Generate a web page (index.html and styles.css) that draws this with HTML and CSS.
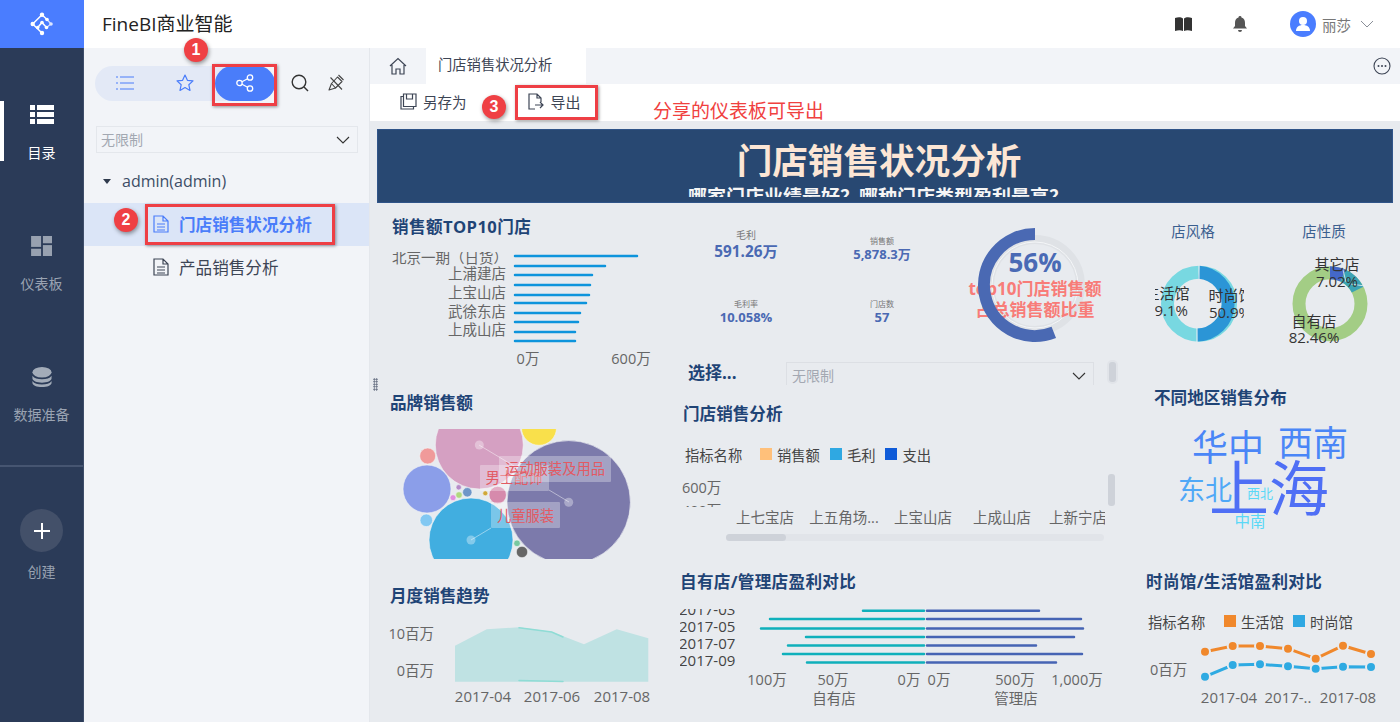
FILE: index.html
```html
<!DOCTYPE html>
<html lang="zh-CN">
<head>
<meta charset="utf-8">
<title>FineBI商业智能</title>
<link rel="stylesheet" href="styles.css">
</head>
<body>
<div class="app">
  <nav class="side">
    <div class="logo">
      <svg width="24" height="24" viewBox="0 0 24 24"><g fill="none" stroke="#fff" stroke-width="1.500"><path d="M12 21 2.700 12 12 2.700 17 7.500"/><path d="M7.700 15.500 12 10.500 16.500 15.500"/></g><path d="M16.500 15.500 21 12 17 7.500" fill="none" stroke="#cfdcff" stroke-width="1.300"/><g fill="#fff"><circle cx="12" cy="2.700" r="2.200"/><circle cx="2.700" cy="12" r="2.200"/><circle cx="12" cy="21" r="2.200"/><circle cx="7.700" cy="15.500" r="1.800"/><circle cx="12" cy="10.500" r="1.800"/><circle cx="16.500" cy="15.500" r="1.800"/><circle cx="17" cy="7.500" r="1.800"/></g><circle cx="21" cy="12" r="1.800" fill="#dbe5ff"/></svg>
    </div>
    <div class="nav-list">
      <a class="nav-item active">
        <svg width="24" height="20" viewBox="0 0 24 20"><g fill="#fff"><rect x="0" y="0" width="5" height="5"/><rect x="7" y="0" width="17" height="5"/><rect x="0" y="7" width="5" height="5"/><rect x="7" y="7" width="17" height="5"/><rect x="0" y="14" width="5" height="5"/><rect x="7" y="14" width="17" height="5"/></g></svg>
        <span>目录</span>
      </a>
      <a class="nav-item">
        <svg width="24" height="20" viewBox="0 0 24 22"><g fill="#98a1b0"><rect x="0" y="0" width="11" height="12"/><rect x="13" y="0" width="10" height="8"/><rect x="0" y="14" width="11" height="8"/><rect x="13" y="10" width="10" height="12"/></g></svg>
        <span>仪表板</span>
      </a>
      <a class="nav-item">
        <svg width="24" height="20" viewBox="0 0 24 23"><g fill="#a3acb9"><ellipse cx="12" cy="6" rx="11" ry="6"/><path d="M1 10c2 3 6 4 11 4s9-1 11-4v3c0 3-5 5-11 5S1 16 1 13z"/><path d="M1 16c2 3 6 4 11 4s9-1 11-4v2c0 3-5 5-11 5S1 21 1 18z"/></g></svg>
        <span>数据准备</span>
      </a>
    </div>
    <a class="create">
      <span class="plus"><svg width="18" height="18" viewBox="0 0 18 18"><path d="M9 1v16M1 9h16" stroke="#fff" stroke-width="2"/></svg></span>
      <span>创建</span>
    </a>
  </nav>

  <div class="shell">
    <header class="top">
      <h1>FineBI商业智能</h1>
      <div class="top-right">
        <svg width="17" height="15" viewBox="0 0 17 15"><path d="M0 1c3-1 6-1 8 .5V14c-2-1-5-1-8 0zM9 1.500C11 0 14 0 17 1v13c-3-1-6-1-8 0z" fill="#333"/></svg>
        <svg class="bell" width="14" height="16" viewBox="0 0 14 16"><path d="M7 0a1.500 1.500 0 0 1 1.500 1.600C11 2.300 12 4.500 12 7v3l2 2.500H0L2 10V7c0-2.500 1-4.700 3.500-5.400A1.500 1.500 0 0 1 7 0zM5 14h4a2 2 0 0 1-4 0z" fill="#555"/></svg>
        <span class="avatar"><svg width="16" height="16" viewBox="0 0 16 16"><circle cx="8" cy="5" r="4" fill="#fff"/><path d="M1 15c0-4 3-6 7-6s7 2 7 6z" fill="#fff"/></svg></span>
        <span class="user">丽莎</span>
        <svg class="chev" width="14" height="8" viewBox="0 0 14 8"><path d="M1 1l6 6 6-6" fill="none" stroke="#8a8f98" stroke-width="1"/></svg>
      </div>
    </header>
    <div class="body">
      <aside class="panel">
        <div class="tools">
          <div class="pill">
            <span class="pill-cell"><svg width="18" height="14" viewBox="0 0 18 14"><path d="M4 1h14M4 7h14M4 13h14M0 1h2M0 7h2M0 13h2" stroke="#4a7dfa" stroke-width="1"/></svg></span>
            <span class="pill-cell"><svg width="18" height="18" viewBox="0 0 18 18"><path d="M9 1l2.400 5.300 5.600.6-4.200 3.800 1.200 5.700L9 13.500l-5 2.900 1.200-5.700L1 6.900l5.600-.6z" fill="none" stroke="#4a7dfa" stroke-width="1.200" stroke-linejoin="round"/></svg></span>
            <span class="pill-cell on"><svg width="18" height="18" viewBox="0 0 18 18"><g fill="none" stroke="#fff" stroke-width="1.300"><circle cx="3.500" cy="9" r="2.700"/><circle cx="14" cy="3.500" r="2.700"/><circle cx="14" cy="14.500" r="2.700"/><path d="M6 7.700l5.600-3M6 10.300l5.600 3"/></g></svg></span>
          </div>
          <svg class="tool-s" width="18" height="18" viewBox="0 0 18 18"><circle cx="8" cy="8" r="6.800" fill="none" stroke="#333" stroke-width="1.400"/><path d="M13 13l4 4" stroke="#333" stroke-width="1.400"/></svg>
          <svg class="tool-p" width="16" height="17" viewBox="0 0 16 17"><g fill="none" stroke="#444" stroke-width="1.100" stroke-linejoin="round"><path d="M3.500 9.500 9.500 3 14 7.500 7.500 14z"/><path d="M10.500 1 15.500 6M3.500 9.500 1 16 7.500 14"/><path d="M2.500 3.500 14 15.500"/></g></svg>
        </div>
        <div class="select side-select"><span>无限制</span><svg width="14" height="8" viewBox="0 0 14 8"><path d="M1 1l6 6 6-6" fill="none" stroke="#333" stroke-width="1.100"/></svg></div>
        <div class="tree-root"><i class="caret"></i>admin(admin)</div>
        <div class="tree-row current">
          <svg width="16" height="18" viewBox="0 0 16 18"><path d="M1 1h9l5 5v11H1zM10 1v5h5M4 9h8M4 12h8M4 15h8" fill="none" stroke="#4a7dfa" stroke-width="1.200"/></svg>
          <span>门店销售状况分析</span>
        </div>
        <div class="tree-row">
          <svg width="16" height="18" viewBox="0 0 16 18"><path d="M1 1h9l5 5v11H1zM10 1v5h5M4 9h8M4 12h8M4 15h8" fill="none" stroke="#3d4555" stroke-width="1.200"/></svg>
          <span>产品销售分析</span>
        </div>
      </aside>

      <main class="main">
        <div class="tabs">
          <span class="home"><svg width="18" height="18" viewBox="0 0 18 18"><path d="M1 9l8-7.500L17 9M3 8v9h4v-5h4v5h4V8" fill="none" stroke="#3d4555" stroke-width="1.200"/></svg></span>
          <span class="tab">门店销售状况分析</span>
          <svg class="more" width="18" height="18" viewBox="0 0 18 18"><circle cx="9" cy="9" r="8" fill="none" stroke="#3d4555" stroke-width="1.100"/><g fill="#3d4555"><circle cx="5.500" cy="9" r="1"/><circle cx="9" cy="9" r="1"/><circle cx="12.500" cy="9" r="1"/></g></svg>
        </div>
        <div class="toolbar">
          <span class="tool"><svg width="17" height="17" viewBox="0 0 17 17"><path d="M3.500 1H16v12.500H3.500zM6.500 1v5h6V1M3.500 3.500H1V16h12.500v-2.500" fill="none" stroke="#3d4555" stroke-width="1.200"/></svg>另存为</span>
          <span class="tool tool-export"><svg width="17" height="17" viewBox="0 0 17 17"><path d="M8 16H2V1h8l4 4v4M10 1v4h4M8 12h8M13 9l3 3-3 3" fill="none" stroke="#3d4555" stroke-width="1.200"/></svg>导出</span>
        </div>
        <div class="canvas">
          <div class="banner">
            <h2>门店销售状况分析</h2>
            <p>哪家门店业绩最好？哪种门店类型盈利最高？</p>
          </div>
          <div class="cols">
            <div class="col col-a">
              <section class="w w-top10">
                <h3>销售额TOP10门店</h3>
                <svg class="chart" width="302" height="146" viewBox="378 239 302 146">
                  <defs><clipPath id="c1"><rect x="378" y="252" width="302" height="140"/></clipPath></defs>
                  <g class="lbl" text-anchor="end" clip-path="url(#c1)">
                    <text x="508" y="257">北京一期（日货）</text>
                    <text x="506" y="273">上浦建店</text>
                    <text x="506" y="292">上宝山店</text>
                    <text x="506" y="311">武徐东店</text>
                    <text x="506" y="329">上成山店</text>
                  </g>
                  <g stroke="#0d94dc" stroke-width="2.500" stroke-linecap="round">
                    <path d="M515 256H637M515 266H605M515 275H592M515 285H590M515 295H589M515 303H586M515 313H580M515 322H578M515 332H575M515 341H575"/>
                  </g>
                  <g class="lbl" text-anchor="middle"><text x="528" y="358">0万</text><text x="631" y="358">600万</text></g>
                </svg>
              </section>
              <section class="w w-brand">
                <h3>品牌销售额</h3>
                <svg class="chart" width="302" height="160" viewBox="378 415 302 160">
                  <defs><clipPath id="c2"><rect x="378" y="429" width="302" height="130"/></clipPath></defs>
                  <g clip-path="url(#c2)" stroke="#f3f5f7" stroke-width=".6">
                    <circle cx="479.300" cy="445" r="44" fill="#d5a0c2"/>
                    <circle cx="539" cy="427.800" r="17.500" fill="#f9e04b"/>
                    <circle cx="427" cy="489" r="24" fill="#8b9ee9"/>
                    <circle cx="427.700" cy="456" r="8" fill="#f09a9a"/>
                    <circle cx="426.300" cy="520.300" r="6.300" fill="#82c8f2"/>
                    <circle cx="471" cy="540" r="42" fill="#41aee0"/>
                    <circle cx="568.700" cy="502.300" r="61.700" fill="#7c7aab"/>
                    <circle cx="497.700" cy="495" r="8.700" fill="#d68aac"/>
                    <circle cx="467.300" cy="492.300" r="4.700" fill="#6f96c8"/>
                    <circle cx="458.700" cy="487.300" r="2.700" fill="#b58bc8"/>
                    <circle cx="459" cy="495" r="3.300" fill="#b0d880"/>
                    <circle cx="453" cy="497.700" r="3" fill="#e090e0"/>
                    <circle cx="485.300" cy="493.300" r="2.500" fill="#d0a838"/>
                    <circle cx="517" cy="543.300" r="3.300" fill="#78c8a0"/>
                    <circle cx="522" cy="552" r="5.700" fill="#666"/>
                  </g>
                  <g stroke="#fff" stroke-opacity=".45" stroke-width="1"><path d="M479 445 514 466M569 502 549 490M471 540 491 528"/></g>
                  <g fill="#fff" fill-opacity=".35"><circle cx="479.300" cy="445" r="4.500"/><circle cx="568.700" cy="502.300" r="4.500"/><circle cx="471" cy="540" r="4.500"/></g>
                  <rect class="tip" x="480" y="465" width="69" height="26" rx="1"/>
                  <text class="tip-t" x="514" y="477">男士配饰</text>
                  <rect class="tip" x="499" y="456" width="112" height="26" rx="1"/>
                  <text class="tip-t" x="555" y="468">运动服装及用品</text>
                  <rect class="tip" x="491" y="502" width="69" height="26" rx="1"/>
                  <text class="tip-t" x="525.500" y="515">儿童服装</text>
                </svg>
              </section>
              <section class="w w-month">
                <h3>月度销售趋势</h3>
                <svg class="chart" width="302" height="114" viewBox="378 608 302 114">
                  <path d="M455 645.700 486.700 629.300 519 627.300 551.700 631.700 584 644.300 616.700 629.300 648.300 638.300V681.700H455z" fill="#bfe2e3"/>
                  <path d="M519 627.800 551.700 632 563 637M519 680.500 563 681.500" fill="none" stroke="#8fdcd5" stroke-width="1.500" stroke-linecap="round"/>
                  <g class="lbl" text-anchor="end"><text x="434" y="633">10百万</text><text x="434" y="670">0百万</text></g>
                  <g class="lbl date" text-anchor="middle"><text x="483" y="696">2017-04</text><text x="552" y="696">2017-06</text><text x="622" y="696">2017-08</text></g>
                </svg>
              </section>
            </div>

            <div class="col col-b">
              <div class="summary">
                <div class="kpis">
                  <div class="kpi big"><small>毛利</small><b>591.26万</b></div>
                  <div class="kpi"><small>销售额</small><b>5,878.3万</b></div>
                  <div class="kpi"><small>毛利率</small><b>10.058%</b></div>
                  <div class="kpi"><small>门店数</small><b>57</b></div>
                </div>
                <svg class="gauge" width="178" height="152" viewBox="952 203 178 152">
                  <circle cx="1035" cy="285" r="45.500" fill="none" stroke="#dfe2e6" stroke-width="9"/>
                  <circle cx="1035" cy="285" r="43" fill="none" stroke="#f4f6f8" stroke-width="1"/>
                  <text x="1035" y="262" class="g-num">56%</text>
                  <text x="1035" y="288" class="g-cap">top10门店销售额</text>
                  <text x="1035" y="309" class="g-cap">占总销售额比重</text>
                  <path d="M1035 234A51 51 0 1 0 1053.800 332.400" fill="none" stroke="#4a69b3" stroke-width="12"/>
                </svg>
              </div>
              <div class="filter">
                <strong>选择...</strong>
                <div class="select mid-select"><span>无限制</span><svg width="14" height="8" viewBox="0 0 14 8"><path d="M1 1l6 6 6-6" fill="none" stroke="#333" stroke-width="1.100"/></svg></div>
                <i class="vbar"></i>
              </div>
              <section class="w w-store">
                <h3>门店销售分析</h3>
                <div class="legend">
                  <span class="l-name">指标名称</span>
                  <span class="l-item"><i class="sw c-a"></i>销售额</span>
                  <span class="l-item"><i class="sw c-b"></i>毛利</span>
                  <span class="l-item"><i class="sw c-c"></i>支出</span>
                </div>
                <svg class="chart" width="450" height="92" viewBox="680 473 450 92">
                  <defs><clipPath id="c3"><rect x="680" y="473" width="60" height="34"/></clipPath><clipPath id="c4"><rect x="680" y="473" width="425" height="92"/></clipPath></defs>
                  <g class="lbl" clip-path="url(#c3)"><text x="682" y="487">600万</text><text x="682" y="510">400万</text></g>
                  <g class="lbl" text-anchor="middle" clip-path="url(#c4)">
                    <text x="765" y="517">上七宝店</text><text x="844" y="517">上五角场...</text><text x="923" y="517">上宝山店</text><text x="1002" y="517">上成山店</text><text x="1078" y="517">上新宁店</text>
                  </g>
                  <rect x="726" y="534" width="378" height="7" rx="3.500" fill="#e1e4e9"/>
                  <rect x="726" y="534" width="60" height="7" rx="3.500" fill="#ced2d9"/>
                  <rect x="1108" y="474" width="7" height="32" rx="3" fill="#ced2d9"/>
                </svg>
              </section>
              <section class="w w-own">
                <h3>自有店/管理店盈利对比</h3>
                <svg class="chart" width="450" height="113" viewBox="680 609 450 113">
                  <g class="lbl dark date"><text x="679" y="609">2017-03</text><text x="679" y="626">2017-05</text><text x="679" y="643">2017-07</text><text x="679" y="660">2017-09</text></g>
                  <g stroke="#0fb0bb" stroke-width="2.500" stroke-linecap="round"><path d="M924 610.700H863M924 619H770M924 628.500H761M924 637H806M924 645.500H788M924 654H783M924 662.500H807"/></g>
                  <g stroke="#4664b4" stroke-width="2.500" stroke-linecap="round"><path d="M927 610.700H1039M927 619H1081M927 628.500H1083M927 637H1074M927 645.500H1036M927 654H1082M927 662.500H1056"/></g>
                  <g class="lbl" text-anchor="middle"><text x="767" y="679">100万</text><text x="833" y="679">50万</text><text x="909" y="679">0万</text><text x="939" y="679">0万</text><text x="1015" y="679">500万</text><text x="1077" y="679">1,000万</text><text x="834" y="698">自有店</text><text x="1016" y="698">管理店</text></g>
                </svg>
              </section>
            </div>

            <div class="col col-c">
              <svg class="chart" width="263" height="172" viewBox="1130 203 263 172">
                <defs><clipPath id="c5"><rect x="1155" y="270" width="89" height="60"/></clipPath></defs>
                <text class="d-title" x="1193" y="231">店风格</text>
                <text class="d-title" x="1324" y="231">店性质</text>
                <circle cx="1199" cy="303.700" r="31.500" fill="none" stroke="#78d8e1" stroke-width="13"/>
                <path d="M1199 272.200A31.500 31.500 0 0 1 1197.200 335.100" fill="none" stroke="#2b95d6" stroke-width="13"/>
                <path d="M1199 265V279M1197 328V342" stroke="#eef1f4" stroke-width="1"/>
                <g class="d-lbl" clip-path="url(#c5)" text-anchor="middle">
                  <text x="1167" y="293">生活馆</text><text x="1167" y="310">49.1%</text>
                  <text x="1231" y="295">时尚馆</text><text x="1230" y="312">50.9%</text>
                </g>
                <circle cx="1330" cy="303.700" r="31" fill="none" stroke="#a3cd85" stroke-width="13"/>
                <path d="M1330 272.700A31 31 0 0 1 1343.100 275.600" fill="none" stroke="#4468c8" stroke-width="13"/>
                <path d="M1343.100 275.600A31 31 0 0 1 1357.600 289.600" fill="none" stroke="#3ba3b5" stroke-width="13"/>
                <path d="M1342 266 1346 282M1351 284 1365 286" stroke="#eef1f4" stroke-width=".8"/>
                <g class="d-lbl" text-anchor="middle">
                  <text x="1337" y="264">其它店</text><text x="1337" y="281">7.02%</text>
                  <text x="1314" y="321">自有店</text><text x="1314" y="337">82.46%</text>
                </g>
              </svg>
              <section class="w w-region">
                <h3>不同地区销售分布</h3>
                <svg class="chart" width="263" height="155" viewBox="1130 410 263 155">
                  <g text-anchor="middle" class="cloud">
                    <text x="1228" y="447" font-size="36" fill="#4a86f7">华中</text>
                    <text x="1313" y="442" font-size="35" fill="#4a86f7">西南</text>
                    <text x="1205" y="489" font-size="27" fill="#4fa8f7">东北</text>
                    <text x="1269" y="488" font-size="60" fill="#4f6ff5">上海</text>
                    <text x="1260" y="493" font-size="13" fill="#5ad8f7">西北</text>
                    <text x="1250" y="521" font-size="15.500" fill="#5ad8f7">中南</text>
                  </g>
                </svg>
              </section>
              <section class="w w-fashion">
                <h3>时尚馆/生活馆盈利对比</h3>
                <div class="legend">
                  <span class="l-name">指标名称</span>
                  <span class="l-item"><i class="sw c-d"></i>生活馆</span>
                  <span class="l-item"><i class="sw c-b"></i>时尚馆</span>
                </div>
                <svg class="chart" width="263" height="82" viewBox="1130 640 263 82">
                  <polyline points="1205,651.700 1232.700,646 1260,646 1288,648.700 1315.700,658.700 1343,645.700 1371,654" fill="none" stroke="#f0882c" stroke-width="3"/>
                  <polyline points="1205,676.700 1232.700,665 1260,664.300 1288,666.300 1315.700,668.700 1343,666.700 1371,667" fill="none" stroke="#2eaae2" stroke-width="3"/>
                  <g fill="#f0882c" stroke="#e8ebef" stroke-width="2"><circle cx="1205" cy="651.700" r="5"/><circle cx="1232.700" cy="646" r="5"/><circle cx="1260" cy="646" r="5"/><circle cx="1288" cy="648.700" r="5"/><circle cx="1315.700" cy="658.700" r="5"/><circle cx="1343" cy="645.700" r="5"/><circle cx="1371" cy="654" r="5"/></g>
                  <g fill="#2eaae2" stroke="#e8ebef" stroke-width="2"><circle cx="1205" cy="676.700" r="5"/><circle cx="1232.700" cy="665" r="5"/><circle cx="1260" cy="664.300" r="5"/><circle cx="1288" cy="666.300" r="5"/><circle cx="1315.700" cy="668.700" r="5"/><circle cx="1343" cy="666.700" r="5"/><circle cx="1371" cy="667" r="5"/></g>
                  <g class="lbl"><text x="1150" y="669">0百万</text></g>
                  <g class="lbl date" text-anchor="middle"><text x="1229" y="697">2017-04</text><text x="1288" y="697">2017-..</text><text x="1348" y="697">2017-08</text></g>
                </svg>
              </section>
            </div>
          </div>
          <i class="grip"></i>
        </div>
      </main>
    </div>
  </div>

  <div class="mark box-1"></div>
  <div class="mark box-2"></div>
  <div class="mark box-3"></div>
  <span class="badge b-1">1</span>
  <span class="badge b-2">2</span>
  <span class="badge b-3">3</span>
  <span class="note">分享的仪表板可导出</span>
</div>
</body>
</html>
```

FILE: styles.css
```css
* { box-sizing: border-box; }
html, body { margin: 0; height: 100%; overflow: hidden; }
body { font-family: "Open Sans", "Noto Sans CJK SC", sans-serif; color: #333; }
h1, h2, h3, p { margin: 0; font-weight: normal; }
i { display: block; }

.app { position: relative; display: flex; width: 1400px; height: 722px; overflow: hidden; }

/* left nav */
.side { width: 84px; flex: none; background: #2b3b58; display: flex; flex-direction: column; border-right: 1px solid #3e4d69; }
.logo { height: 48px; background: #4a7dff; display: flex; align-items: center; justify-content: center; margin-right: -1px; }
.nav-list { display: flex; flex-direction: column; gap: 71px; padding-top: 53px; }
.nav-item { height: 60px; display: flex; flex-direction: column; align-items: center; gap: 18px; padding-top: 4px; font-size: 14px; line-height: 20px; color: #9aa3b2; }
.nav-item svg { flex: none; }
.nav-item.active { color: #fff; border-left: 4px solid #fff; padding-right: 4px; }
.create { margin-top: 42px; border-top: 2px solid #465571; padding-top: 42px; display: flex; flex-direction: column; align-items: center; gap: 10px; font-size: 14px; line-height: 20px; color: #9aa3b2; }
.plus { width: 43px; height: 43px; border-radius: 50%; background: #435069; display: flex; align-items: center; justify-content: center; }

/* top */
.shell { flex: 1; min-width: 0; display: flex; flex-direction: column; }
.top { height: 48px; flex: none; background: #fff; display: flex; align-items: center; justify-content: space-between; padding: 0 26px 0 18px; }
.top h1 { font-size: 19px; color: #222; line-height: 48px; }
.top-right { display: flex; align-items: center; }
.bell { margin-left: 41px; }
.avatar { width: 26px; height: 26px; border-radius: 50%; background: #4a7dff; display: flex; align-items: center; justify-content: center; margin-left: 43px; }
.user { font-size: 14.500px; color: #777; margin-left: 6px; }
.chev { margin-left: 9px; }

.body { flex: 1; min-height: 0; display: flex; }

/* tree panel */
.panel { width: 286px; flex: none; background: #f2f4f8; border-right: 1px solid #e4e7ec; }
.tools { display: flex; align-items: center; padding: 17px 0 0 11px; height: 52px; }
.pill { width: 180px; height: 35px; border-radius: 18px; background: #e3e9f6; display: flex; margin-top: 1px; }
.pill-cell { width: 60px; display: flex; align-items: center; justify-content: center; border-radius: 18px; }
.pill-cell.on { background: #4a7dfa; }
.tool-s { margin-left: 16px; }
.tool-p { margin-left: 19px; }
.select { display: flex; align-items: center; justify-content: space-between; border: 1px solid #e4e7ec; font-size: 14px; color: #a3a8b2; }
.select span { margin-top: -2px; }
.select svg { flex: none; }
.side-select { width: 262px; height: 27px; margin: 26px 0 0 12px; padding: 0 7px 0 4px; }
.tree-root { display: flex; align-items: center; height: 24px; margin-top: 16px; padding-left: 19px; font-size: 16px; color: #3d4d66; }
.caret { width: 0; height: 0; border: 4.500px solid transparent; border-top: 5px solid #2f3a4d; border-bottom: 0; margin-right: 11px; }
.tree-row { display: flex; align-items: center; gap: 10px; height: 43px; padding: 0 0 2px 69px; font-size: 16.600px; color: #3d4555; }
.tree-row.current { margin-top: 10px; background: #dbe5f7; color: #4a7dfa; font-weight: 700; }

/* main */
.main { flex: 1; min-width: 0; display: flex; flex-direction: column; }
.tabs { height: 36px; flex: none; background: #f2f4f8; display: flex; align-items: center; }
.home { width: 56px; display: flex; justify-content: center; margin-top: -1px; }
.tab { width: 160px; height: 36px; background: #fff; font-size: 14.300px; line-height: 34px; padding-left: 12px; color: #3d4555; }
.more { margin-left: auto; margin-right: 9px; margin-top: -1px; }
.toolbar { height: 37px; flex: none; background: #fff; display: flex; align-items: center; padding: 0 0 2px 30px; font-size: 14.500px; color: #3d4555; }
.tool { display: flex; align-items: center; gap: 6px; }
.tool-export { margin-left: 60px; gap: 7px; font-size: 15px; }

.canvas { position: relative; flex: 1; min-height: 0; background: #e8ebef; padding-top: 8px; }
.banner { height: 74px; width: 1016px; margin-left: 7px; background: #284872; text-align: center; overflow: hidden; box-shadow: inset 0 0 0 1px #2f5488; }
.banner h2 { font-size: 35.600px; font-weight: 700; color: #fce6d5; line-height: 48px; padding: 7px 12px 0 0; }
.banner p { font-size: 19px; font-weight: 700; color: #f5f5f5; line-height: 24px; height: 12px; overflow: hidden; padding-right: 14px; margin-top: 1px; }
.cols { display: flex; margin-left: 8px; }
.col { flex: none; display: flex; flex-direction: column; }
.col-a { width: 302px; }
.col-b { width: 450px; }
.col-c { width: 263px; }
.chart { display: block; overflow: hidden; }
.w h3 { font-size: 16.600px; font-weight: 700; color: #1f4476; line-height: 24px; white-space: nowrap; }
.w-top10 { height: 182px; padding-top: 12px; }
.w-top10 h3 { padding-left: 14px; letter-spacing: .4px; }
.w-brand { height: 190px; padding-top: 6px; }
.w-brand h3 { padding-left: 12px; }
.w-month { height: 147px; padding-top: 9px; }
.w-month h3 { padding-left: 12px; }
.lbl text { font-size: 14.500px; fill: #666; dominant-baseline: central; }
.lbl.date text { font-size: 15px; }
.lbl.dark text { fill: #444; }
.tip { fill: #fff; fill-opacity: .3; }
.tip-t { font-size: 14.300px; fill: #e25a63; text-anchor: middle; dominant-baseline: central; }

.summary { display: flex; height: 152px; }
.kpis { width: 272px; flex: none; display: grid; grid-template-columns: 132px 140px; grid-template-rows: 70px 70px; padding-top: 25px; justify-items: center; align-content: start; }
.kpi { display: flex; flex-direction: column; align-items: center; color: #4a69b3; font-size: 13px; line-height: 15px; }
.kpi:nth-child(2) { padding-top: 7px; }
.kpi small { font-size: 8px; line-height: 12px; color: #777; }
.kpi b { font-weight: 700; }
.kpi.big small { font-size: 10px; line-height: 14px; }
.kpi.big b { font-size: 15.300px; line-height: 18px; }
.gauge { display: block; flex: none; overflow: visible; }
.g-num { font-size: 26px; font-weight: 700; fill: #4a6ab5; text-anchor: middle; dominant-baseline: central; }
.g-cap { font-size: 17px; font-weight: 700; fill: #f87c78; text-anchor: middle; dominant-baseline: central; }

.filter { height: 40px; display: flex; align-items: flex-start; padding-left: 8px; }
.filter strong { font-size: 17px; font-weight: 700; color: #1f4476; line-height: 36px; width: 98px; }
.mid-select { width: 308px; height: 23px; margin-top: 7px; border-color: #dcdfe4; border-bottom: 0; padding: 3px 7px 0 5px; }
.vbar { width: 11px; height: 24px; margin: 5px 0 0 13px; border-radius: 5px; background: #ced2d9; border: 2px solid #e1e4e9; }

.w-store { height: 170px; padding-top: 7px; }
.w-store h3 { padding-left: 3px; }
.legend { display: flex; align-items: center; font-size: 14.300px; color: #444; height: 24px; }
.w-store .legend { margin: 16px 0 0 5px; }
.w-store .chart { margin-top: 7px; }
.l-name { width: 75px; }
.l-item { display: flex; align-items: center; gap: 5px; margin-right: 10px; }
.sw { width: 12px; height: 12px; flex: none; }
.c-a { background: #ffc07a; }
.c-b { background: #2fa8e2; }
.c-c { background: #0f5bd8; }
.c-d { background: #f0882c; }
.w-own { height: 157px; padding-top: 5px; }
.w-own h3 { letter-spacing: .3px; }
.w-own .chart { margin-top: 15px; }

.d-title { font-size: 14.500px; fill: #3b5f8f; text-anchor: middle; dominant-baseline: central; }
.d-lbl text { font-size: 15px; fill: #333; dominant-baseline: central; }
.w-region { height: 190px; padding-top: 11px; }
.w-region h3 { padding-left: 24px; }
.cloud text { dominant-baseline: central; }
.w-fashion { height: 157px; padding-top: 5px; }
.w-fashion h3 { padding-left: 16px; letter-spacing: .3px; }
.w-fashion .legend { margin: 15px 0 0 18px; }
.w-fashion .l-name { width: 76px; }
.w-fashion .l-item { margin-right: 9px; }
.w-fashion .chart { margin-top: 7px; }

.grip { position: absolute; left: 3px; top: 257px; width: 5px; height: 13px; background: radial-gradient(circle, #5a6478 0 .8px, transparent 1px) 0 0 / 2.500px 2.500px; }

/* annotations */
.mark { position: absolute; border: 3px solid #ee3f45; box-shadow: 1px 1px 3px rgba(0,0,0,.4); }
.box-1 { left: 212px; top: 64px; width: 65px; height: 42px; }
.box-2 { left: 145px; top: 204px; width: 190px; height: 41px; }
.box-3 { left: 515px; top: 85px; width: 83px; height: 35px; }
.badge { position: absolute; width: 24px; height: 24px; border-radius: 50%; background: #ef4044; color: #fff; font: 700 16px/24px "Liberation Sans", sans-serif; text-align: center; box-shadow: 1px 2px 4px rgba(0,0,0,.4); }
.b-1 { left: 184px; top: 38px; }
.b-2 { left: 114px; top: 208px; }
.b-3 { left: 482px; top: 95px; }
.note { position: absolute; left: 653px; top: 97px; font-size: 19px; line-height: 28px; color: #f0413f; white-space: nowrap; }
```
